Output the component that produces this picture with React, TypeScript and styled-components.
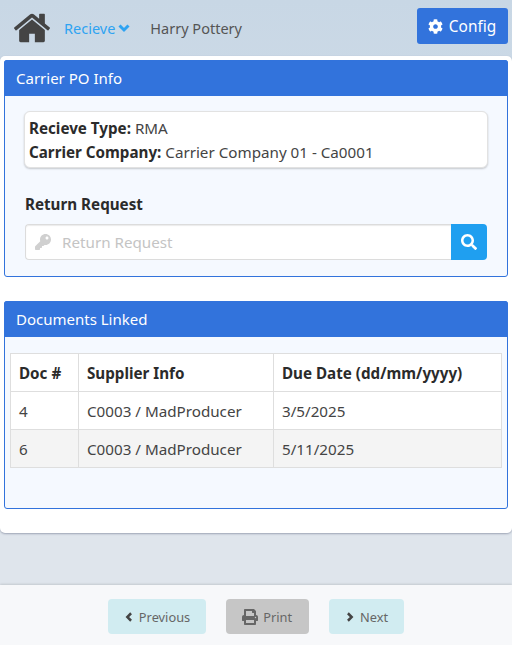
import styled, { createGlobalStyle } from 'styled-components';
import { FaCog, FaKey, FaPrint, FaSearch } from 'react-icons/fa';

const GlobalStyle = createGlobalStyle`
  * {
    box-sizing: border-box;
  }
  html, body {
    margin: 0;
    padding: 0;
  }
  body {
    font-family: 'Noto Sans', 'Open Sans', sans-serif;
    font-size: 15.2px;
    color: #333;
  }
`;

const rows = [
  { doc: '4', supplier: 'C0003 / MadProducer', due: '3/5/2025' },
  { doc: '6', supplier: 'C0003 / MadProducer', due: '5/11/2025' },
];

const HomeIcon = () => (
  <svg viewBox="0 0 1792 1792" fill="currentColor">
    <path d="M1472 992v480q0 26-19 45t-45 19h-384v-384h-256v384h-384q-26 0-45-19t-19-45v-480q0-1 .5-3t.5-3l575-474 575 474q1 2 1 6zm223-69l-62 74q-8 9-21 11h-3q-13 0-21-7l-692-577-692 577q-12 8-24 7-13-2-21-11l-62-74q-8-10-7-23.500t11-21.500l719-599q32-26 76-26t76 26l244 204v-195q0-14 9-23t23-9h192q14 0 23 9t9 23v408l219 182q10 8 11 21.500t-7 23.500z" />
  </svg>
);

const Chevron = ({ points }: { points: string }) => (
  <svg viewBox="0 0 12 12" fill="none" stroke="currentColor" strokeWidth="3">
    <polyline points={points} />
  </svg>
);

const App = () => {
  return (
    <Page>
      <GlobalStyle />
      <TopBar>
        <HomeLink>
          <HomeIcon />
        </HomeLink>
        <MenuLink>
          Recieve
          <Chevron points="1.500,3.500 6,8 10.500,3.500" />
        </MenuLink>
        <UserName>Harry Pottery</UserName>
        <ConfigButton>
          <FaCog />
          Config
        </ConfigButton>
      </TopBar>

      <Content>
        <Panel>
          <PanelHeading>Carrier PO Info</PanelHeading>
          <PanelBody>
            <InfoCard>
              <InfoLine>
                <strong>Recieve Type:</strong> RMA
              </InfoLine>
              <InfoLine>
                <strong>Carrier Company:</strong> Carrier Company 01 - Ca0001
              </InfoLine>
            </InfoCard>
            <FieldLabel>Return Request</FieldLabel>
            <InputGroup>
              <InputBox>
                <FaKey />
                <span>Return Request</span>
              </InputBox>
              <SearchButton>
                <FaSearch />
              </SearchButton>
            </InputGroup>
          </PanelBody>
        </Panel>

        <Panel>
          <PanelHeading>Documents Linked</PanelHeading>
          <TableBody>
            <DocTable>
              <thead>
                <tr>
                  <th>Doc #</th>
                  <th>Supplier Info</th>
                  <th>Due Date (dd/mm/yyyy)</th>
                </tr>
              </thead>
              <tbody>
                {rows.map(row => (
                  <tr key={row.doc}>
                    <td>{row.doc}</td>
                    <td>{row.supplier}</td>
                    <td>{row.due}</td>
                  </tr>
                ))}
              </tbody>
            </DocTable>
          </TableBody>
        </Panel>
      </Content>

      <Footer>
        <NavButton>
          <Chevron points="8.500,1.500 4,6 8.500,10.500" />
          Previous
        </NavButton>
        <PrintButton>
          <FaPrint />
          Print
        </PrintButton>
        <NavButton>
          <Chevron points="3.500,1.500 8,6 3.500,10.500" />
          Next
        </NavButton>
      </Footer>
    </Page>
  );
};

const Page = styled.div`
  width: 512px;
  height: 645px;
  display: flex;
  flex-direction: column;
  overflow: hidden;
  background: linear-gradient(#c8d7e5, #dfe5ec 80%);
`;

const TopBar = styled.div`
  height: 56px;
  display: flex;
  align-items: center;
  padding: 0 4px 0 12px;
  flex: 0 0 auto;
  font-size: 14.5px;
`;

const HomeLink = styled.div`
  display: flex;
  color: #444;
  margin-right: 12px;
  svg {
    width: 40px;
    height: 40px;
  }
`;

const MenuLink = styled.div`
  display: flex;
  align-items: center;
  gap: 3px;
  color: #2ea3f2;
  margin-right: 20px;
  svg {
    width: 12px;
    height: 12px;
  }
`;

const UserName = styled.div`
  color: #555;
`;

const ConfigButton = styled.div`
  margin-left: auto;
  align-self: flex-start;
  margin-top: 8px;
  width: 91px;
  height: 36px;
  padding-right: 1px;
  display: flex;
  align-items: center;
  justify-content: center;
  gap: 6px;
  background: #3273dc;
  border-radius: 3px;
  color: #fff;
  font-size: 15.4px;
  svg {
    width: 15px;
    height: 15px;
  }
`;

const Content = styled.div`
  height: 477px;
  flex: 0 0 auto;
  background: #fff;
  border-radius: 5px;
  padding: 4px;
  display: flex;
  flex-direction: column;
  gap: 24px;
  box-shadow: 0 1px 2px rgba(60, 70, 100, 0.4);
`;

const Panel = styled.div`
  border: 1px solid #3273dc;
  border-radius: 3px;
  background: #f5f9ff;
`;

const PanelHeading = styled.div`
  height: 36px;
  margin: -1px -1px 0;
  padding: 0 12px;
  display: flex;
  align-items: center;
  background: #3273dc;
  border-radius: 3px 3px 0 0;
  color: #fff;
  font-size: 15px;
`;

const PanelBody = styled.div`
  padding: 15px 19px 16px;
`;

const TableBody = styled.div`
  padding: 16px 5px 40px;
`;

const InfoCard = styled.div`
  background: #fff;
  border: 1px solid #e2e2e2;
  border-radius: 6px;
  box-shadow: 0 1px 2px rgba(0, 0, 0, 0.2);
  padding: 4px 4px 3px;
`;

const InfoLine = styled.div`
  height: 24px;
  line-height: 24px;
  color: #444;
  strong {
    color: #2b2b2b;
  }
`;

const FieldLabel = styled.div`
  margin-top: 26px;
  margin-left: 1px;
  height: 20px;
  line-height: 20px;
  font-weight: 700;
  color: #2b2b2b;
`;

const InputGroup = styled.div`
  display: flex;
  height: 36px;
  margin: 10px 1px 0;
`;

const InputBox = styled.div`
  flex: 1;
  display: flex;
  align-items: center;
  gap: 11px;
  padding-left: 9px;
  background: #fff;
  border: 1px solid #dcdcdc;
  border-right: none;
  border-radius: 4px 0 0 4px;
  box-shadow: inset 0 1px 1px rgba(0, 0, 0, 0.08);
  color: #c4c4c4;
  svg {
    width: 16px;
    height: 16px;
    color: #d0d0d0;
  }
`;

const SearchButton = styled.div`
  width: 36px;
  display: flex;
  align-items: center;
  justify-content: center;
  background: #1f9ff0;
  border-radius: 0 4px 4px 0;
  color: #fff;
  svg {
    width: 16px;
    height: 16px;
  }
`;

const DocTable = styled.table`
  width: 100%;
  border-collapse: collapse;
  background: #fff;
  th, td {
    height: 38px;
    padding: 0 8px;
    border: 1px solid #dedede;
    text-align: left;
  }
  th {
    font-weight: 700;
    color: #2b2b2b;
  }
  td {
    color: #444;
  }
  th:nth-child(1) {
    width: 68px;
  }
  th:nth-child(2) {
    width: 195px;
  }
  tbody tr:nth-child(2) {
    background: #f4f4f4;
  }
`;

const Footer = styled.div`
  margin-top: auto;
  height: 60px;
  flex: 0 0 auto;
  display: flex;
  justify-content: center;
  align-items: flex-start;
  gap: 20px;
  padding-top: 14px;
  background: #f7f8fa;
  box-shadow: 0 -1px 2px rgba(0, 0, 0, 0.12);
`;

const NavButton = styled.div`
  height: 35px;
  padding: 0 16px;
  display: flex;
  align-items: center;
  gap: 5px;
  background: #d1ecf1;
  border-radius: 4px;
  color: #666;
  font-size: 12.8px;
  svg {
    width: 10px;
    height: 10px;
    color: #444;
  }
`;

const PrintButton = styled(NavButton)`
  padding-right: 17px;
  background: #c6c6c6;
  svg {
    width: 16px;
    height: 16px;
    color: #666;
  }
`;

export default App;
